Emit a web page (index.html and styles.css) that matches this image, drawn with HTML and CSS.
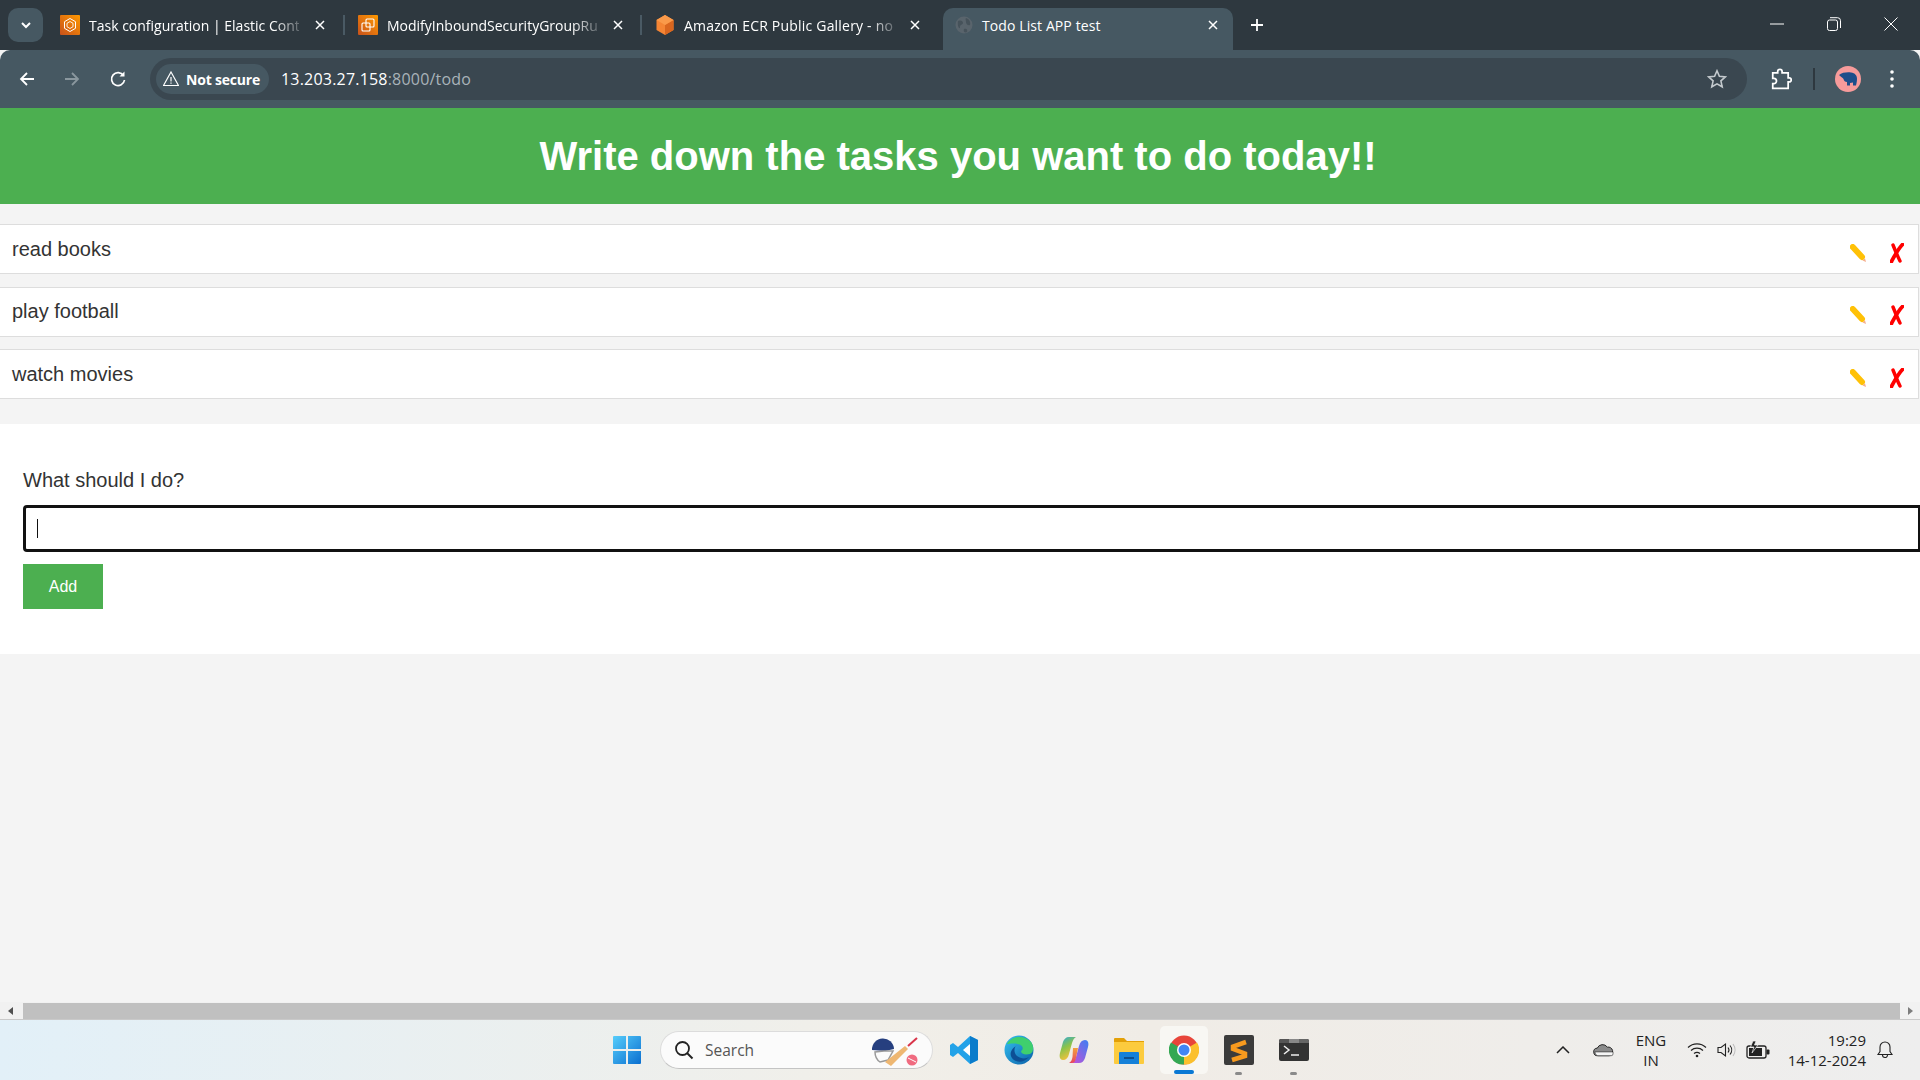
FILE: index.html
```html
<!DOCTYPE html>
<html lang="en">
<head>
<meta charset="utf-8">
<title>Todo List APP test</title>
<link rel="stylesheet" href="styles.css">
</head>
<body>
<div class="screen">
  <div class="tabstrip">
    <div class="tab-drop"><svg width="14" height="14" viewBox="0 0 14 14"><path d="M3 5l4 4 4-4" fill="none" stroke="#fff" stroke-width="2"/></svg></div>
    <div class="tab tab-first">
      <svg class="fav" viewBox="0 0 20 20"><defs><linearGradient id="aws" x1="0" y1="1" x2="1" y2="0"><stop offset="0" stop-color="#c8511b"/><stop offset="1" stop-color="#ff9900"/></linearGradient></defs><rect width="20" height="20" rx="1" fill="url(#aws)"/><path d="M10 3.500l5.500 3.200v6.600L10 16.500l-5.500-3.200V6.700z" fill="none" stroke="#fff" stroke-width="1"/><path d="M10 6.500l3 1.800v3.400l-3 1.800-3-1.800V8.300z" fill="none" stroke="#fff" stroke-width=".9"/></svg>
      <span class="tab-title">Task configuration | Elastic Cont</span>
      <svg class="tab-x" viewBox="0 0 12 12"><path d="M2 2l8 8M10 2l-8 8" stroke="#fff" stroke-width="1.500"/></svg>
    </div>
    <i class="tab-sep"></i>
    <div class="tab tab-second">
      <svg class="fav" viewBox="0 0 20 20"><rect width="20" height="20" rx="1" fill="url(#aws)"/><rect x="8" y="4" width="8" height="8" rx="1" fill="none" stroke="#fff" stroke-width="1.100"/><rect x="4" y="8" width="8" height="8" rx="1" fill="none" stroke="#fff" stroke-width="1.100"/></svg>
      <span class="tab-title">ModifyInboundSecurityGroupRu</span>
      <svg class="tab-x" viewBox="0 0 12 12"><path d="M2 2l8 8M10 2l-8 8" stroke="#fff" stroke-width="1.500"/></svg>
    </div>
    <i class="tab-sep"></i>
    <div class="tab">
      <svg class="fav" viewBox="0 0 20 20"><path d="M10 0l8.500 5v10L10 20l-8.500-5V5z" fill="#f58534"/><path d="M10 10l8.500-5v10L10 20z" fill="#d9661f"/><path d="M10 0l8.500 5L10 10 1.500 5z" fill="#fa9a4a"/></svg>
      <span class="tab-title tab-title-wide">Amazon ECR Public Gallery - no</span>
      <svg class="tab-x" viewBox="0 0 12 12"><path d="M2 2l8 8M10 2l-8 8" stroke="#fff" stroke-width="1.500"/></svg>
    </div>
    <div class="tab tab-active">
      <svg class="fav" viewBox="0 0 20 20"><circle cx="10" cy="10" r="8.500" fill="#59646c"/><path d="M4 6c3-1 5 0 5 2s-3 1-3 4-3 0-2-6zM12 3c3 1 5 4 4 7-2 1-4-1-4-3s-1-3 0-4zM10 14c2-1 4 0 3 3-2 1-4 0-3-3z" fill="#46525a"/></svg>
      <span class="tab-title">Todo List APP test</span>
      <svg class="tab-x" viewBox="0 0 12 12"><path d="M2 2l8 8M10 2l-8 8" stroke="#fff" stroke-width="1.500"/></svg>
    </div>
    <svg class="tab-new" viewBox="0 0 14 14"><path d="M7 1v12M1 7h12" stroke="#fff" stroke-width="1.800"/></svg>
    <div class="win-btns">
      <svg class="win-btn" viewBox="0 0 14 14"><path d="M0 7h14" stroke="#fff" stroke-width="1"/></svg>
      <svg class="win-btn" viewBox="0 0 14 14"><rect x=".5" y="3" width="10" height="10.500" rx="2" fill="none" stroke="#fff"/><path d="M3 .7h7.500a3 3 0 0 1 3 3V11" fill="none" stroke="#fff"/></svg>
      <svg class="win-btn" viewBox="0 0 14 14"><path d="M.5.5l13 13M13.500.5l-13 13" stroke="#fff" stroke-width="1"/></svg>
    </div>
  </div>

  <div class="toolbar">
    <svg class="nav nav-back" viewBox="0 0 18 18"><path d="M16 9H3M9 3L3 9l6 6" fill="none" stroke="#fff" stroke-width="1.800"/></svg>
    <svg class="nav nav-fwd" viewBox="0 0 18 18"><path d="M2 9h13M9 3l6 6-6 6" fill="none" stroke="#8a979e" stroke-width="1.800"/></svg>
    <svg class="nav nav-reload" viewBox="0 0 18 18"><path d="M14.500 5.500A6.500 6.500 0 1 0 15.500 10" fill="none" stroke="#fff" stroke-width="1.700"/><path d="M15.500 1.500v5h-5z" fill="#fff"/></svg>
    <div class="omnibox">
      <div class="secure">
        <svg class="warn" viewBox="0 0 16 16"><path d="M8 1l7.500 13.500H.5z" fill="none" stroke="#fff" stroke-width="1.200"/><path d="M8 6v4.500M8 11.500v1.200" stroke="#fff" stroke-width="1.200"/></svg>
        <span>Not secure</span>
      </div>
      <div class="url">13.203.27.158<span class="url-dim">:8000/todo</span></div>
      <svg class="star" viewBox="0 0 20 20"><path d="M10 1.800l2.400 5.500 6 .6-4.500 4 1.300 5.900L10 14.800l-5.200 3 1.300-5.900-4.500-4 6-.6z" fill="none" stroke="#c4cace" stroke-width="1.600"/></svg>
    </div>
    <svg class="puzzle" viewBox="0 0 20 20"><path d="M2.500 4.500H7V3.200a2 2 0 0 1 4 0v1.300h5.500V9h1a1.800 1.800 0 0 1 0 3.600h-1v5.900h-14v-4.200h1a2.400 2.400 0 0 0 0-4.800h-1z" fill="none" stroke="#fff" stroke-width="1.600"/></svg>
    <i class="tool-sep"></i>
    <svg class="avatar" viewBox="0 0 26 26"><circle cx="13" cy="13" r="13" fill="#f79b9b"/><path d="M4 9c3-2.500 8-3 12-2.500 4 .5 6 3 6 6.500 0 3-1 6-1 6.500h-3v-3l-3 .5v2.500h-3v-3.500c-2 0-3-1-3.500-3C7.500 11.500 6 11 4 9z" fill="#1f4e8a"/></svg>
    <svg class="kebab" viewBox="0 0 6 20"><circle cx="3" cy="3" r="1.800" fill="#fff"/><circle cx="3" cy="10" r="1.800" fill="#fff"/><circle cx="3" cy="17" r="1.800" fill="#fff"/></svg>
  </div>

  <main class="page">
    <h1 class="banner">Write down the tasks you want to do today!!</h1>
    <ul class="list">
      <li class="row"><span class="row-text">read books</span>
        <svg class="pencil" viewBox="0 0 16 18"><path d="M2.800 3L12 13" stroke="#ffc107" stroke-width="6" stroke-linecap="round"/><path d="M12.500 16.500l3.500 1.500-1-3.800z" fill="#f5b090"/></svg>
        <svg class="cross" viewBox="0 0 14 20"><path d="M3 2c2 5 4 10 7 16" fill="none" stroke="#ff0000" stroke-width="3.400" stroke-linecap="round"/><path d="M12.500 1.500C8 6 5 12 1.500 18.500" fill="none" stroke="#ff0000" stroke-width="3.800" stroke-linecap="round"/></svg></li>
      <li class="row"><span class="row-text">play football</span>
        <svg class="pencil" viewBox="0 0 16 18"><path d="M2.800 3L12 13" stroke="#ffc107" stroke-width="6" stroke-linecap="round"/><path d="M12.500 16.500l3.500 1.500-1-3.800z" fill="#f5b090"/></svg>
        <svg class="cross" viewBox="0 0 14 20"><path d="M3 2c2 5 4 10 7 16" fill="none" stroke="#ff0000" stroke-width="3.400" stroke-linecap="round"/><path d="M12.500 1.500C8 6 5 12 1.500 18.500" fill="none" stroke="#ff0000" stroke-width="3.800" stroke-linecap="round"/></svg></li>
      <li class="row"><span class="row-text">watch movies</span>
        <svg class="pencil" viewBox="0 0 16 18"><path d="M2.800 3L12 13" stroke="#ffc107" stroke-width="6" stroke-linecap="round"/><path d="M12.500 16.500l3.500 1.500-1-3.800z" fill="#f5b090"/></svg>
        <svg class="cross" viewBox="0 0 14 20"><path d="M3 2c2 5 4 10 7 16" fill="none" stroke="#ff0000" stroke-width="3.400" stroke-linecap="round"/><path d="M12.500 1.500C8 6 5 12 1.500 18.500" fill="none" stroke="#ff0000" stroke-width="3.800" stroke-linecap="round"/></svg></li>
    </ul>
    <form class="form">
      <label class="form-label">What should I do?</label>
      <div class="field"><i class="caret"></i></div>
      <div class="add">Add</div>
    </form>
  </main>

  <div class="hscroll">
    <svg class="sb-arrow" viewBox="0 0 8 10"><path d="M6 1v8L1 5z" fill="#505050"/></svg>
    <div class="sb-thumb"></div>
    <svg class="sb-arrow" viewBox="0 0 8 10"><path d="M2 1v8l5-4z" fill="#7d7d7d"/></svg>
  </div>

  <footer class="taskbar">
    <div class="tb-center">
      <svg class="tb-win" viewBox="0 0 30 30"><defs><linearGradient id="wn" x1="0" y1="0" x2="1" y2="1"><stop offset="0" stop-color="#56cdfb"/><stop offset="1" stop-color="#0a6fd0"/></linearGradient></defs><path fill="url(#wn)" d="M1 2a1 1 0 0 1 1-1h12v13H1zM16 1h12a1 1 0 0 1 1 1v12H16zM1 16h13v13H2a1 1 0 0 1-1-1zM16 16h13v12a1 1 0 0 1-1 1H16z"/></svg>
      <div class="tb-search">
        <svg class="tb-lens" viewBox="0 0 20 20"><circle cx="8.500" cy="8.500" r="6.500" fill="none" stroke="#222" stroke-width="1.800"/><path d="M13 13l5.500 5.500" stroke="#222" stroke-width="2"/></svg>
        <span class="tb-search-text">Search</span>
        <svg class="tb-cricket" viewBox="0 0 52 32"><path d="M2 16a11 11 0 0 1 22-1l-9 2z" fill="#263f7f"/><path d="M5 18c0 5 2 8 5 10l8-2 5-9-9 0z" fill="none" stroke="#9a9a9a" stroke-width="1.500"/><path d="M15 28l20-16 3 3-17 17z" fill="#eeb772"/><path d="M38 12l9-8" stroke="#d9344a" stroke-width="2"/><circle cx="42" cy="26" r="5.500" fill="#f06b80"/><path d="M38 24l8 4" stroke="#fff"/></svg>
      </div>
      <svg class="tb-app" viewBox="0 0 30 30"><path d="M21 1l8 4v20l-8 4L9 18l-5 4-3-2v-10l3-2 5 4z" fill="#23a2e8"/><path d="M21 1l8 4v20l-8 4z" fill="#0b7ccb"/><path d="M21 9l-7 6 7 6z" fill="#fff"/></svg>
      <svg class="tb-app" viewBox="0 0 30 30"><defs><linearGradient id="eg" x1="0" y1="0" x2="1" y2="1"><stop offset="0" stop-color="#35c1f1"/><stop offset="1" stop-color="#0a5fa8"/></linearGradient></defs><circle cx="15" cy="15" r="14.500" fill="url(#eg)"/><path d="M3 9C7 1 20-1 27 7c3 4 3 10-1 12-5 1-9 0-9-3 3-2 2-6-3-7C9 8 5 9 3 9z" fill="#3fcf6e"/><path d="M14 10c-4 1-5 7-1 11 4 3 9 3 12 1-4 5-11 6-15 3-5-3-5-11 4-15z" fill="#0d4f95"/></svg>
      <svg class="tb-app" viewBox="0 0 30 30"><defs><linearGradient id="cp" x1="0" y1="0" x2=".4" y2="1"><stop offset="0" stop-color="#2aa8e0"/><stop offset=".5" stop-color="#8bc34a"/><stop offset="1" stop-color="#f2c13c"/></linearGradient><linearGradient id="cp2" x1="1" y1="0" x2="0" y2="1"><stop offset="0" stop-color="#3b7ff2"/><stop offset="1" stop-color="#c451d8"/></linearGradient><linearGradient id="cp3" x1="0" y1="0" x2="0" y2="1"><stop offset="0" stop-color="#f2a13c"/><stop offset="1" stop-color="#e8455f"/></linearGradient></defs><path d="M10 2h7c-2 1-3 3-4 6l-3 11c-1 4-3 6-6 6-3 0-4-3-3-7l3-11c1-3 3-5 6-5z" fill="url(#cp)"/><path d="M20 28h-7c2-1 3-3 4-6l3-11c1-4 3-6 6-6 3 0 4 3 3 7l-3 11c-1 3-3 5-6 5z" fill="url(#cp2)"/><path d="M14 13h5l-2 10c-.5 3-2 5-4 5h-3c2-1 3-3 3.500-6z" fill="url(#cp3)"/></svg>
      <svg class="tb-app" viewBox="0 0 30 30"><path d="M0 4a1 1 0 0 1 1-1h9l3 3h17v4H0z" fill="#e3a008"/><path d="M0 7h30v21a1 1 0 0 1-1 1H1a1 1 0 0 1-1-1z" fill="#fccb3e"/><path d="M5 18a1 1 0 0 1 1-1h18a1 1 0 0 1 1 1v11H5z" fill="#1580d8"/><path d="M10 23h10" stroke="#0b3f75" stroke-width="1.500"/></svg>
      <div class="tb-tile">
        <svg class="tb-app" viewBox="0 0 30 30"><circle cx="15" cy="15" r="14.500" fill="#e8453a"/><path d="M15 15L28 7.500A14.500 14.500 0 0 1 15 29.500z" fill="#fbc02d"/><path d="M15 15L15 29.500A14.500 14.500 0 0 1 2 7.500z" fill="#34a853"/><circle cx="15" cy="15" r="7" fill="#fff"/><circle cx="15" cy="15" r="5.500" fill="#4285f4"/></svg>
        <i class="tb-active"></i>
      </div>
      <div class="tb-slot">
        <svg class="tb-app" viewBox="0 0 30 30"><rect width="30" height="30" rx="2" fill="#3b3b3b"/><path d="M22 7L9 11.500V14l12 4.500V21L8 25" fill="none" stroke="#f79a1e" stroke-width="4.500"/></svg>
        <i class="tb-dot"></i>
      </div>
      <div class="tb-slot">
        <svg class="tb-app" viewBox="0 0 30 30"><rect y="4" width="30" height="22" rx="2" fill="#333"/><path d="M0 6a2 2 0 0 1 2-2h8v4H0z" fill="#555"/><path d="M10 4h10v4H10z" fill="#888"/><path d="M20 4h8a2 2 0 0 1 2 2v2H20z" fill="#666"/><path d="M5 11l5 4-5 4" fill="none" stroke="#eee" stroke-width="1.500"/><path d="M12 20h8" stroke="#eee" stroke-width="1.500"/></svg>
        <i class="tb-dot"></i>
      </div>
    </div>
    <div class="tray">
      <svg class="tr-caret" viewBox="0 0 14 8"><path d="M1 7l6-6 6 6" fill="none" stroke="#222" stroke-width="1.500"/></svg>
      <svg class="tr-cloud" viewBox="0 0 22 14"><path d="M5 13a4 4 0 0 1-.5-8A6 6 0 0 1 15 4a4.500 4.500 0 0 1 2 9z" fill="#8b8b8b" stroke="#222"/><path d="M2 9h19v2a2 2 0 0 1-2 2H5a4 4 0 0 1-3-4z" fill="#f5f5f5" stroke="#222" stroke-width=".6"/></svg>
      <div class="tr-lang">ENG<br>IN</div>
      <svg class="tr-wifi" viewBox="0 0 20 16"><path d="M1 5.500a13 13 0 0 1 18 0M4 8.500a9 9 0 0 1 12 0M7 11.500a5 5 0 0 1 6 0" fill="none" stroke="#222" stroke-width="1.200"/><circle cx="10" cy="14" r="1.300" fill="#222"/></svg>
      <svg class="tr-vol" viewBox="0 0 20 16"><path d="M1 5.500h3L8.500 2v12L4 10.500H1z" fill="none" stroke="#222" stroke-width="1.100"/><path d="M11 5.500a4 4 0 0 1 0 5M13 3.500a7 7 0 0 1 0 9" fill="none" stroke="#222" stroke-width="1.100"/><path d="M16 2a10 10 0 0 1 0 12" fill="none" stroke="#bbb" stroke-width="1.100"/></svg>
      <svg class="tr-batt" viewBox="0 0 24 18"><rect x="1" y="5" width="19" height="12" rx="2" fill="none" stroke="#222" stroke-width="1.300"/><rect x="3" y="7" width="13" height="8" fill="#222"/><rect x="20.500" y="8.500" width="3" height="5" rx="1" fill="#222"/><path d="M7 0L4.500 6h3.500L6 12l6-8H8.500L10 0z" fill="#222" stroke="#eee" stroke-width=".7"/></svg>
      <div class="tr-clock">19:29<br>14-12-2024</div>
      <svg class="tr-bell" viewBox="0 0 16 18"><path d="M8 1a5 5 0 0 1 5 5v4.500l2 3H1l2-3V6a5 5 0 0 1 5-5zM5.500 14a2.500 2.500 0 0 0 5 0" fill="none" stroke="#222" stroke-width="1.100"/></svg>
    </div>
  </footer>
</div>
</body>
</html>
```

FILE: styles.css
```css
* { box-sizing: border-box; }
html, body { margin: 0; padding: 0; height: 100%; overflow: hidden; }
body { font-family: "Liberation Sans", Arial, sans-serif; background: #f4f4f4; }
.screen { width: 1920px; height: 1080px; display: flex; flex-direction: column; overflow: hidden; }

.tabstrip { height: 50px; background: #2e383f; display: flex; align-items: flex-end; flex: none; padding-left: 8px; color: #fff; font-family: "Open Sans", sans-serif; }
.tab-drop { width: 35px; height: 34px; margin-bottom: 8px; background: #465862; border-radius: 10px; display: flex; align-items: center; justify-content: center; margin-right: 17px; }
.tab { width: 280px; height: 42px; display: flex; align-items: center; padding-bottom: 8px; flex: none; }
.tab-first { width: 276px; }
.tab-second { width: 275px; }
.fav { width: 20px; height: 20px; flex: none; margin-right: 9px; }
.tab-title { width: 210px; flex: none; font-size: 14px; white-space: nowrap; color: #fff; -webkit-mask-image: linear-gradient(90deg, #000 88%, rgba(0,0,0,.25)); mask-image: linear-gradient(90deg, #000 88%, rgba(0,0,0,.25)); }
.tab-title-wide { letter-spacing: .2px; }
.tab-x { width: 12px; height: 12px; margin-left: 15px; flex: none; }
.tab-sep { width: 2px; height: 20px; background: #4a5a64; margin: 0 13px 15px 7px; flex: none; }
.tab-active { width: 290px; margin-left: 8px; background: #465862; border-radius: 10px 10px 0 0; padding-left: 11px; }
.tab-active .tab-title { -webkit-mask-image: none; mask-image: none; width: 210px; letter-spacing: .1px; }
.tab-active .fav { margin-right: 8px; }
.tab-new { width: 14px; height: 14px; margin: 0 0 18px 17px; flex: none; }
.win-btns { margin-left: auto; display: flex; gap: 43px; padding: 0 22px 19px 0; }
.win-btn { width: 14px; height: 14px; flex: none; }

.toolbar { height: 58px; background: #465862; flex: none; display: flex; align-items: center; padding-left: 18px; border-radius: 10px 10px 0 0; }
.nav { width: 18px; height: 18px; flex: none; }
.nav-fwd { margin-left: 27px; }
.nav-reload { margin-left: 28px; }
.omnibox { width: 1597px; height: 42px; margin-left: 23px; background: #3a4750; border-radius: 21px; display: flex; align-items: center; padding-left: 6px; flex: none; }
.secure { width: 113px; height: 30px; background: #465862; border-radius: 15px; display: flex; align-items: center; padding-left: 7px; gap: 7px; color: #fff; font: 700 14px "Open Sans", sans-serif; letter-spacing: -.2px; flex: none; }
.warn { width: 16px; height: 16px; flex: none; }
.url { margin-left: 12px; font: 400 16px "Open Sans", sans-serif; letter-spacing: .2px; color: #fff; }
.url-dim { color: #a9b3b9; }
.star { width: 20px; height: 20px; margin-left: auto; margin-right: 20px; flex: none; }
.puzzle { width: 22px; height: 22px; margin-left: 23px; flex: none; }
.tool-sep { width: 2px; height: 22px; background: #2e383f; margin-left: 21px; flex: none; }
.avatar { width: 26px; height: 26px; margin-left: 20px; flex: none; }
.kebab { width: 6px; height: 20px; margin-left: 28px; flex: none; }

.page { flex: 1; min-height: 0; display: flex; flex-direction: column; background: #f4f4f4; }
.banner { margin: 0; height: 96px; flex: none; background: #4caf50; color: #fff; font-size: 40px; font-weight: 700; display: flex; align-items: center; justify-content: center; padding-right: 4px; }
.list { list-style: none; margin: 20px 0 0; padding: 0 1px 0 0; display: flex; flex-direction: column; gap: 12.500px; }
.row { height: 50px; background: #fff; border: 1px solid #ddd; border-left: none; display: flex; align-items: center; padding: 0 14px 0 12px; }
.row-text { font-size: 20px; color: #333; flex: 1; }
.pencil { width: 16px; height: 18px; margin: 7px 24px 0 0; flex: none; }
.cross { width: 14px; height: 20px; margin: 7px 0 0; flex: none; }
.form { margin-top: 25px; height: 230px; background: #fff; padding: 44px 0 0 23px; display: flex; flex-direction: column; align-items: flex-start; }
.form-label { font-size: 20px; color: #333; line-height: 24px; }
.field { width: 100%; height: 47px; margin-top: 13px; border: 3px solid #111; border-right-width: 2px; border-radius: 4px 0 0 4px; background: #fff; padding: 11px 0 0 11px; flex: none; }
.caret { display: block; width: 1px; height: 19px; background: #111; }
.add { width: 80px; height: 45px; margin-top: 12px; background: #4caf50; color: #fff; font-size: 16px; display: flex; align-items: center; justify-content: center; }

.hscroll { height: 18px; flex: none; display: flex; align-items: center; background: #f1f1f1; border-bottom: 1px solid #c9c9c9; }
.sb-arrow { width: 8px; height: 10px; margin: 0 7px; flex: none; }
.sb-thumb { flex: 1; height: 16px; background: #c0c0c0; margin: 0 0 0 1px; }
.sb-thumb + .sb-arrow { margin: 0 6px 0 6px; }

.taskbar { height: 60px; flex: none; position: relative; display: flex; align-items: center; background: linear-gradient(90deg, #e2f0f8 0%, #f1efe9 45%, #f0ece6 60%, #eeeeee 100%); padding-left: 612px; font-family: "Open Sans", sans-serif; color: #222; }
.tb-center { display: flex; align-items: center; }
.tb-win { width: 30px; height: 30px; flex: none; }
.tb-search { width: 273px; height: 38px; margin: 0 16px 0 18px; background: #fbfbfb; border: 1px solid #dcdcdc; border-bottom-color: #c4c4c4; border-radius: 19px; display: flex; align-items: center; padding-left: 13px; flex: none; }
.tb-lens { width: 20px; height: 20px; flex: none; }
.tb-search-text { font-size: 15.500px; color: #555; margin-left: 11px; }
.tb-cricket { width: 52px; height: 32px; margin-left: auto; margin-right: 10px; flex: none; }
.tb-app { width: 30px; height: 30px; flex: none; margin-right: 25px; display: block; }
.tb-tile, .tb-slot { position: relative; flex: none; }
.tb-tile { width: 48px; height: 48px; margin: 0 16px 0 -9px; background: #f8f7f3; border-radius: 5px; display: flex; align-items: center; justify-content: center; }
.tb-tile .tb-app { margin: 0; }
.tb-active { position: absolute; left: 14px; bottom: 0; width: 20px; height: 4px; border-radius: 2px; background: #0a78d4; }
.tb-dot { position: absolute; left: 11px; top: 37px; width: 7px; height: 3px; border-radius: 2px; background: #8a8a8a; }
.tray { position: absolute; top: 0; right: 0; height: 60px; width: 373px; display: flex; align-items: center; padding-left: 9px; }
.tr-caret { width: 14px; height: 8px; flex: none; }
.tr-cloud { width: 21px; height: 14px; margin-left: 23px; flex: none; }
.tr-lang { width: 40px; margin-left: 17px; text-align: center; font-size: 15px; line-height: 20px; flex: none; }
.tr-wifi { width: 20px; height: 16px; margin-left: 16px; flex: none; }
.tr-vol { width: 20px; height: 16px; margin-left: 10px; flex: none; }
.tr-batt { width: 24px; height: 18px; margin-left: 9px; flex: none; }
.tr-clock { width: 90px; margin-left: 6px; text-align: right; font-size: 15px; line-height: 20px; flex: none; }
.tr-bell { width: 16px; height: 18px; margin-left: 11px; flex: none; }
```
